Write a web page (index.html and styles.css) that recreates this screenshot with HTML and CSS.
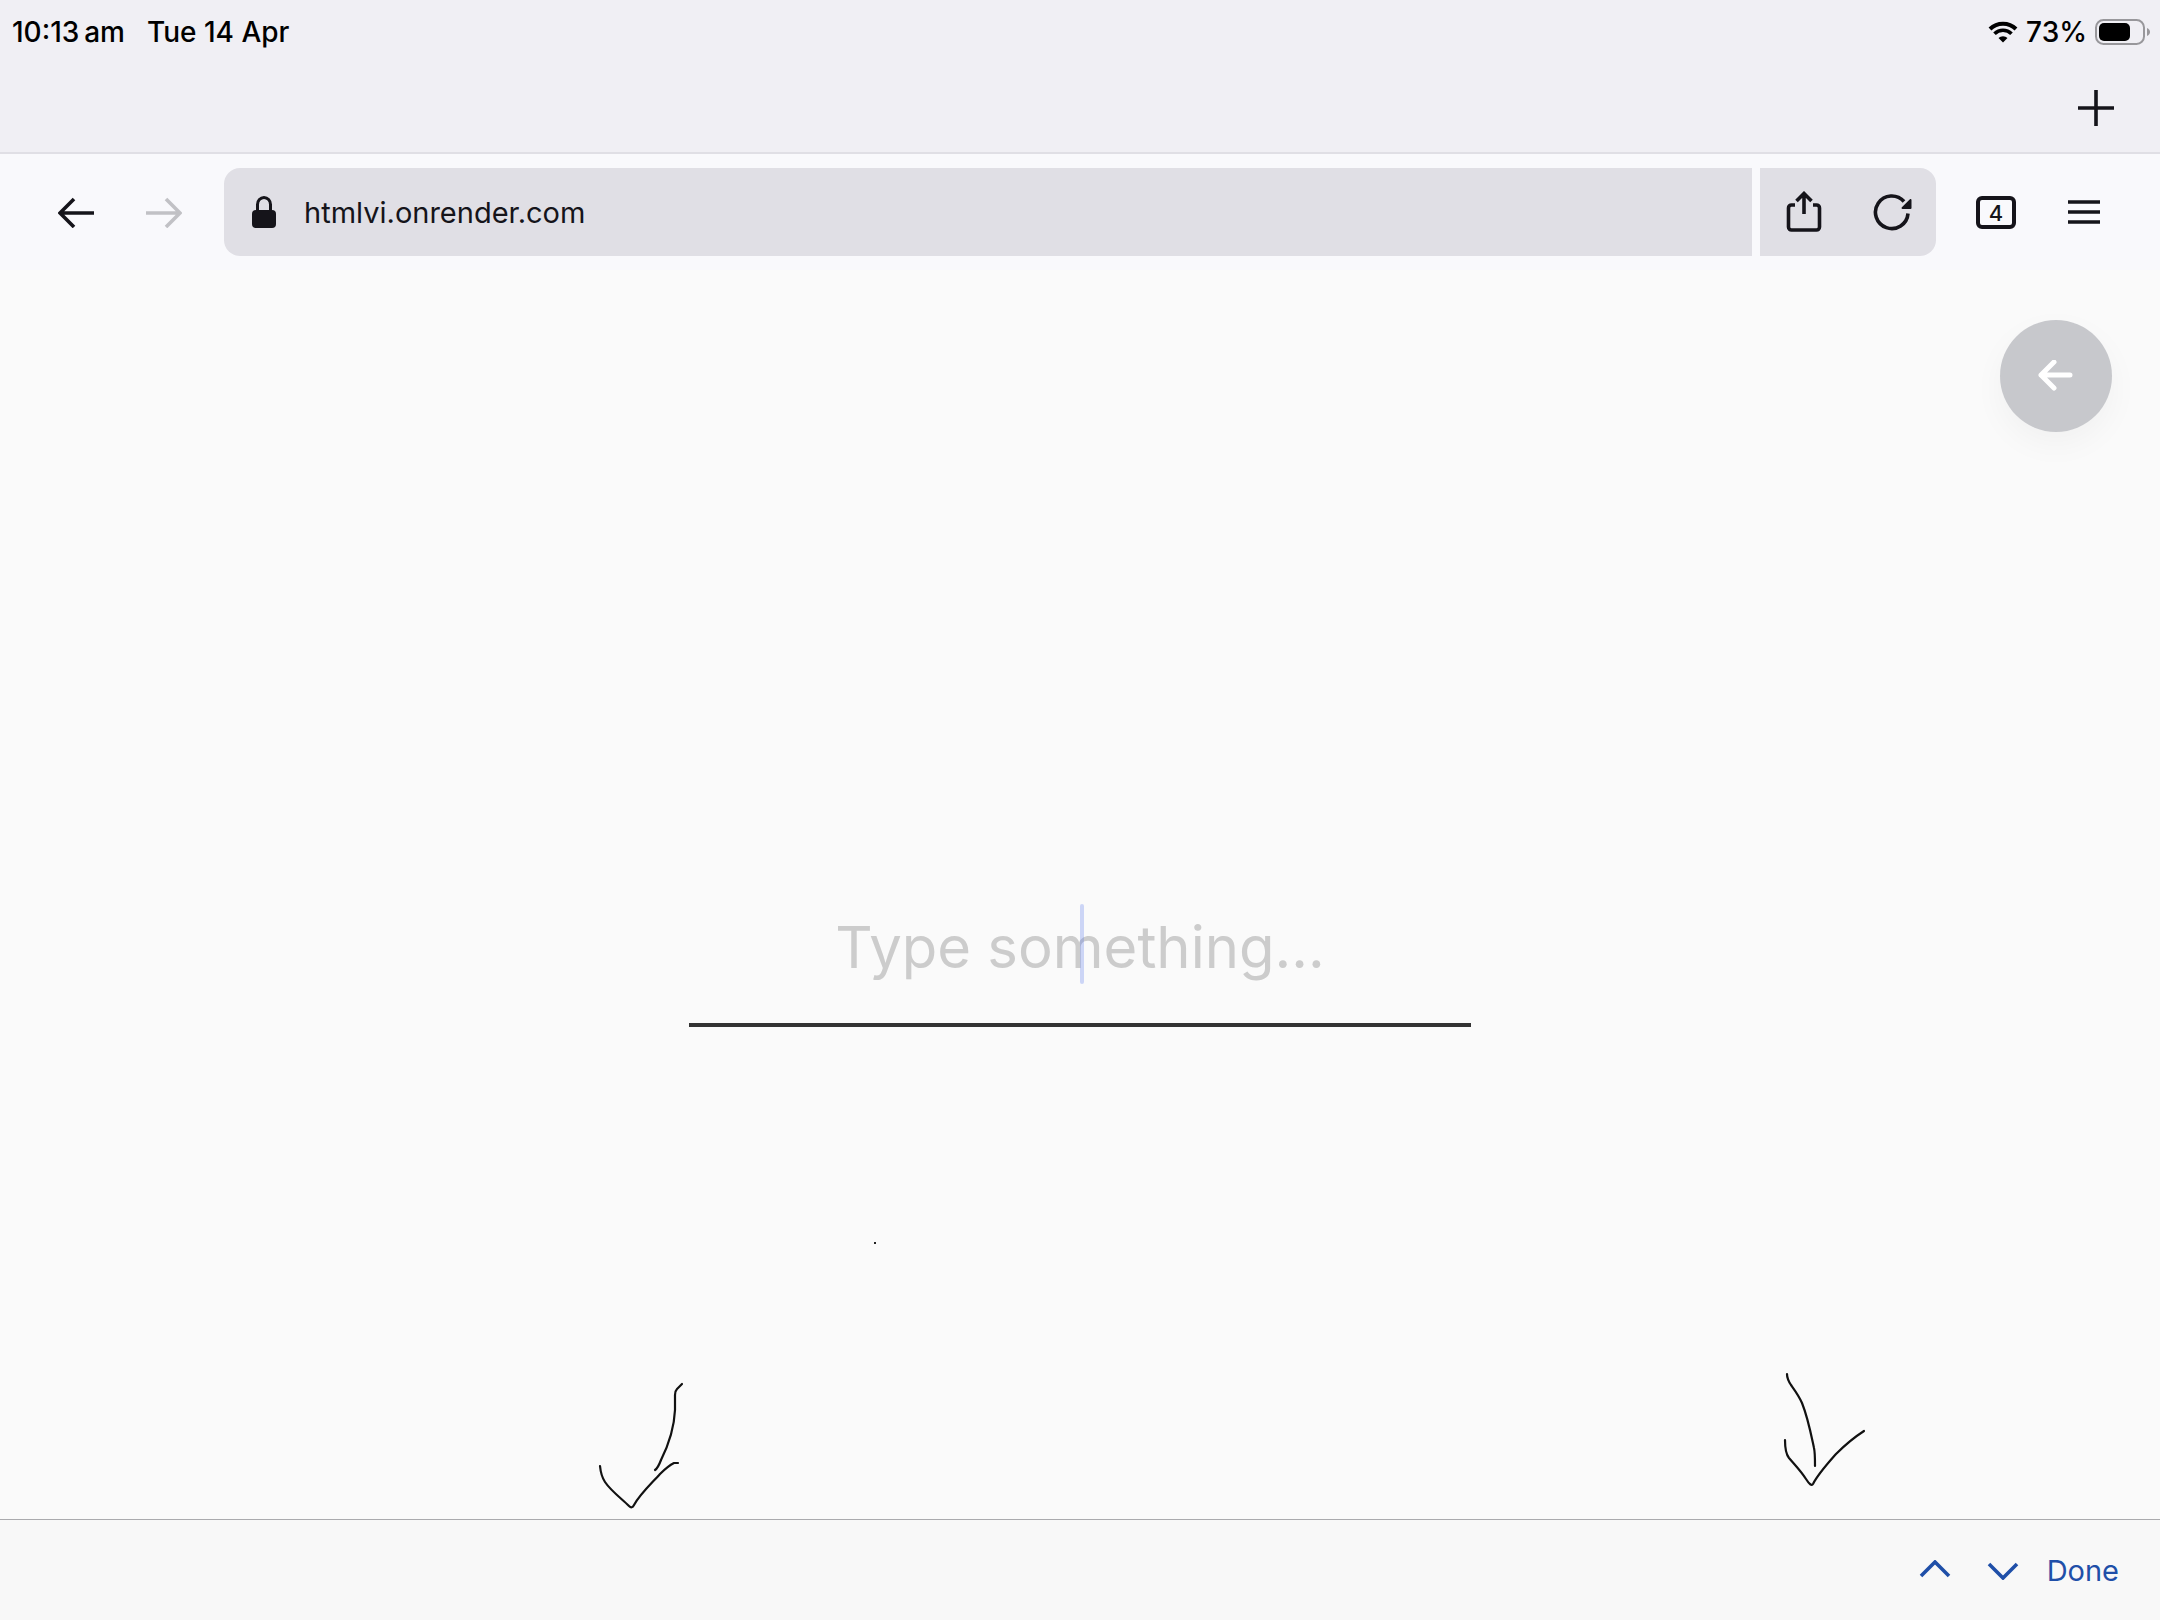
FILE: index.html
```html
<!DOCTYPE html>
<html lang="en">
<head>
  <meta charset="UTF-8">
  <meta name="viewport" content="width=device-width, initial-scale=1.0">
  <title>htmlvi.onrender.com</title>
  <link rel="stylesheet" href="styles.css">
</head>
<body>

  <!-- Status bar and tabs -->
  <header class="top">
    <div class="status-bar">
      <div class="status-left">
        <span>10:13&#8201;am</span>
        <span>Tue 14 Apr</span>
      </div>
      <div class="status-right">
        <svg width="30" height="22" viewBox="0 0 30 22">
          <path d="M2 8a18.500 18.500 0 0 1 26 0" fill="none" stroke="#000" stroke-width="4"/>
          <path d="M6.500 12.800a12 12 0 0 1 17 0" fill="none" stroke="#000" stroke-width="3.600"/>
          <path d="M10.500 17a6.400 6.400 0 0 1 9 0L15 21.500z"/>
        </svg>
        <span>73%</span>
        <svg width="56" height="26" viewBox="0 0 56 26">
          <rect x="1" y="1" width="48" height="24" rx="7.500" fill="none" stroke="#98979b" stroke-width="2"/>
          <rect x="4" y="4" width="31" height="18" rx="5"/>
          <path d="M52 9c4 1.500 4 6.500 0 8z" fill="#98979b"/>
        </svg>
      </div>
    </div>
    <div class="tab-strip">
      <button class="icon-btn" aria-label="New tab">
        <svg width="36" height="36" viewBox="0 0 36 36"><path d="M18 0v36M0 18h36" stroke="#15141a" stroke-width="3.600"/></svg>
      </button>
    </div>
  </header>

  <!-- Browser toolbar -->
  <nav class="toolbar">
    <button class="icon-btn" aria-label="Back">
      <svg width="36" height="32" viewBox="0 0 36 32"><path d="M36 17H2M16 3L2 17l14 14" fill="none" stroke="#15141a" stroke-width="3.600"/></svg>
    </button>
    <button class="icon-btn" aria-label="Forward" disabled>
      <svg width="36" height="32" viewBox="0 0 36 32"><path d="M0 17h34M20 3l14 14-14 14" fill="none" stroke="#c1c1c5" stroke-width="3.600"/></svg>
    </button>
    <div class="address">
      <label class="url-box">
        <svg width="24" height="32" viewBox="0 0 24 32">
          <path d="M5.500 16V8.500a6.500 7 0 0 1 13 0V16" fill="none" stroke="#15141a" stroke-width="3"/>
          <rect y="14" width="24" height="18" rx="4" fill="#15141a"/>
        </svg>
        <input class="url" type="text" value="htmlvi.onrender.com" aria-label="Address">
      </label>
      <div class="page-actions">
        <button class="icon-btn" aria-label="Share">
          <svg width="36" height="42" viewBox="0 0 36 42">
            <path d="M9 14H5.500a3 3 0 0 0-3 3v19a3 3 0 0 0 3 3h25a3 3 0 0 0 3-3V17a3 3 0 0 0-3-3H27M18 23V2M10.500 10L18 2.500 25.500 10" fill="none" stroke="#15141a" stroke-width="3.600"/>
          </svg>
        </button>
        <button class="icon-btn" aria-label="Reload">
          <svg width="40" height="38" viewBox="0 0 40 38">
            <path d="M36 20.500A16.300 16.300 0 1 1 32 8.500" fill="none" stroke="#15141a" stroke-width="3.600"/>
            <path d="M39.500 7v8a1 1 0 0 1-1 1h-8c-1 0-1.300-1-.6-1.700l8-8c.7-.7 1.600-.3 1.600.7z" fill="#15141a"/>
          </svg>
        </button>
      </div>
    </div>
    <button class="icon-btn tab-count" aria-label="Show tabs">4</button>
    <button class="icon-btn menu" aria-label="Menu">
      <svg width="32" height="24" viewBox="0 0 32 24"><path d="M0 2h32M0 12h32M0 22h32" stroke="#15141a" stroke-width="3.600"/></svg>
    </button>
  </nav>

  <!-- Page -->
  <main class="page">
    <button class="float-back" aria-label="Go back">
      <svg width="36" height="32" viewBox="0 0 36 32"><path d="M32 15H3M16 2L3 15l13 13" fill="none" stroke="#fff" stroke-width="5" stroke-linecap="round" stroke-linejoin="round"/></svg>
    </button>

    <div class="field">
      <input class="type-input" type="text" placeholder="Type something..." aria-label="Type something">
      <span class="caret"></span>
    </div>

    <!-- Pen marks -->
    <span class="dot"></span>
    <svg class="ink ink-left" width="120" height="150" viewBox="0 0 120 150">
      <path d="M102 14L97 19Q95 21 95 25L95 40C94 62 86 80 81 90Q78 98 75 100"/>
      <path d="M20 96Q21 106 25 112C31 121 42 129 49 136Q52 139 54 135C60 124 71 114 80 104Q88 96 94 93L98 93"/>
    </svg>
    <svg class="ink ink-right" width="120" height="140" viewBox="0 0 120 140">
      <path d="M17 14Q17 19 21 25C26 32 29 36 32 43C38 58 41 74 44 88Q45 92 45 106"/>
      <path d="M15 80Q15 93 19 98C25 105 31 111 36 119Q41 127 43 124C48 114 59 102 66 94Q80 80 94 71"/>
    </svg>
  </main>

  <!-- Keyboard accessory bar -->
  <footer class="accessory">
    <div class="field-nav">
      <button class="icon-btn" aria-label="Previous field">
        <svg width="32" height="20" viewBox="0 0 32 20"><path d="M2 16L16 2l14 14" fill="none" stroke="#1f4fa8" stroke-width="3.600"/></svg>
      </button>
      <button class="icon-btn" aria-label="Next field">
        <svg width="32" height="20" viewBox="0 0 32 20"><path d="M2 4l14 14L30 4" fill="none" stroke="#1f4fa8" stroke-width="3.600"/></svg>
      </button>
    </div>
    <button class="icon-btn done">Done</button>
  </footer>

</body>
</html>
```
FILE: styles.css
```css
* {
  box-sizing: border-box;
}

body {
  margin: 0;
  min-height: 100vh;
  display: flex;
  flex-direction: column;
  font-family: Inter, "Liberation Sans", sans-serif;
  background-color: #fafafa;
  color: #15141a;
}

svg {
  display: block;
  flex-shrink: 0;
}

.icon-btn {
  display: flex;
  justify-content: center;
  align-items: center;
  padding: 0;
  border: none;
  background: none;
  color: inherit;
  font: inherit;
  cursor: pointer;
}

/* Status bar + tab strip */
.top {
  background-color: #f0eff4;
  border-bottom: 2px solid #e0dfe5;
}

.status-bar {
  display: flex;
  justify-content: space-between;
  height: 64px;
  padding: 0 9px 0 12px;
  font-size: 28px;
  font-weight: 500;
  color: #000;
}

.status-left,
.status-right {
  display: flex;
  align-items: center;
}

.status-left {
  gap: 22px;
}

.status-right {
  gap: 8px;
}

.tab-strip {
  display: flex;
  justify-content: flex-end;
  height: 88px;
  padding: 0 20px;
}

.tab-strip .icon-btn {
  width: 88px;
}

/* Toolbar */
.toolbar {
  display: flex;
  height: 116px;
  padding: 14px 32px;
  background-color: #f9f9fc;
}

.toolbar .icon-btn {
  width: 88px;
  height: 88px;
}

.address {
  flex: 1;
  display: flex;
  gap: 8px;
  margin: 0 16px;
  overflow: hidden;
  border-radius: 16px;
}

.url-box {
  flex: 1;
  display: flex;
  align-items: center;
  gap: 28px;
  padding: 0 28px;
  background-color: #e0dfe5;
}

.url {
  flex: 1;
  padding: 0;
  border: none;
  outline: none;
  background: none;
  font: inherit;
  font-size: 29px;
  color: #15141a;
}

.page-actions {
  display: flex;
  background-color: #e0dfe5;
}

.toolbar .tab-count {
  width: 40px;
  height: 33px;
  margin: 28px 24px;
  border: 4px solid #15141a;
  border-radius: 6px;
  font-size: 22px;
  font-weight: 500;
}

/* Page */
.page {
  position: relative;
  flex: 1;
  display: flex;
  justify-content: center;
  align-items: center;
}

.float-back {
  position: absolute;
  top: 50px;
  right: 48px;
  display: flex;
  justify-content: center;
  align-items: center;
  width: 112px;
  height: 112px;
  padding: 0;
  border: none;
  border-radius: 50%;
  background-color: #c7c8cc;
  box-shadow: 0 12px 32px rgba(0, 0, 0, 0.04);
  cursor: pointer;
}

.field {
  position: relative;
  width: 90%;
  max-width: 782px;
  margin-top: 98px;
}

.type-input {
  display: block;
  width: 100%;
  height: 166px;
  padding: 10px 0 0;
  border: none;
  border-bottom: 4px solid #333;
  outline: none;
  background: none;
  font: inherit;
  font-size: 58px;
  text-align: center;
  color: #333;
}

.type-input::placeholder {
  color: #ccc;
  opacity: 1;
}

.caret {
  position: absolute;
  top: 43px;
  left: 50%;
  width: 4px;
  height: 80px;
  border-radius: 2px;
  background-color: rgba(66, 105, 235, 0.25);
}

.dot {
  position: absolute;
  left: 874px;
  bottom: 275px;
  width: 2px;
  height: 2px;
  background-color: #222;
}

.ink {
  position: absolute;
  fill: none;
  stroke: #111;
  stroke-width: 2.2px;
  stroke-linecap: round;
  stroke-linejoin: round;
  pointer-events: none;
}

.ink-left {
  left: 580px;
  bottom: -1px;
}

.ink-right {
  right: 270px;
  bottom: 19px;
}

/* Accessory bar */
.accessory {
  display: flex;
  justify-content: flex-end;
  align-items: center;
  gap: 28px;
  height: 101px;
  padding: 0 41px;
  border-top: 1px solid #aaaaad;
  background-color: #f8f8f8;
  color: #1f4fa8;
}

.field-nav {
  display: flex;
  gap: 36px;
}

.done {
  font-size: 29px;
}
```
